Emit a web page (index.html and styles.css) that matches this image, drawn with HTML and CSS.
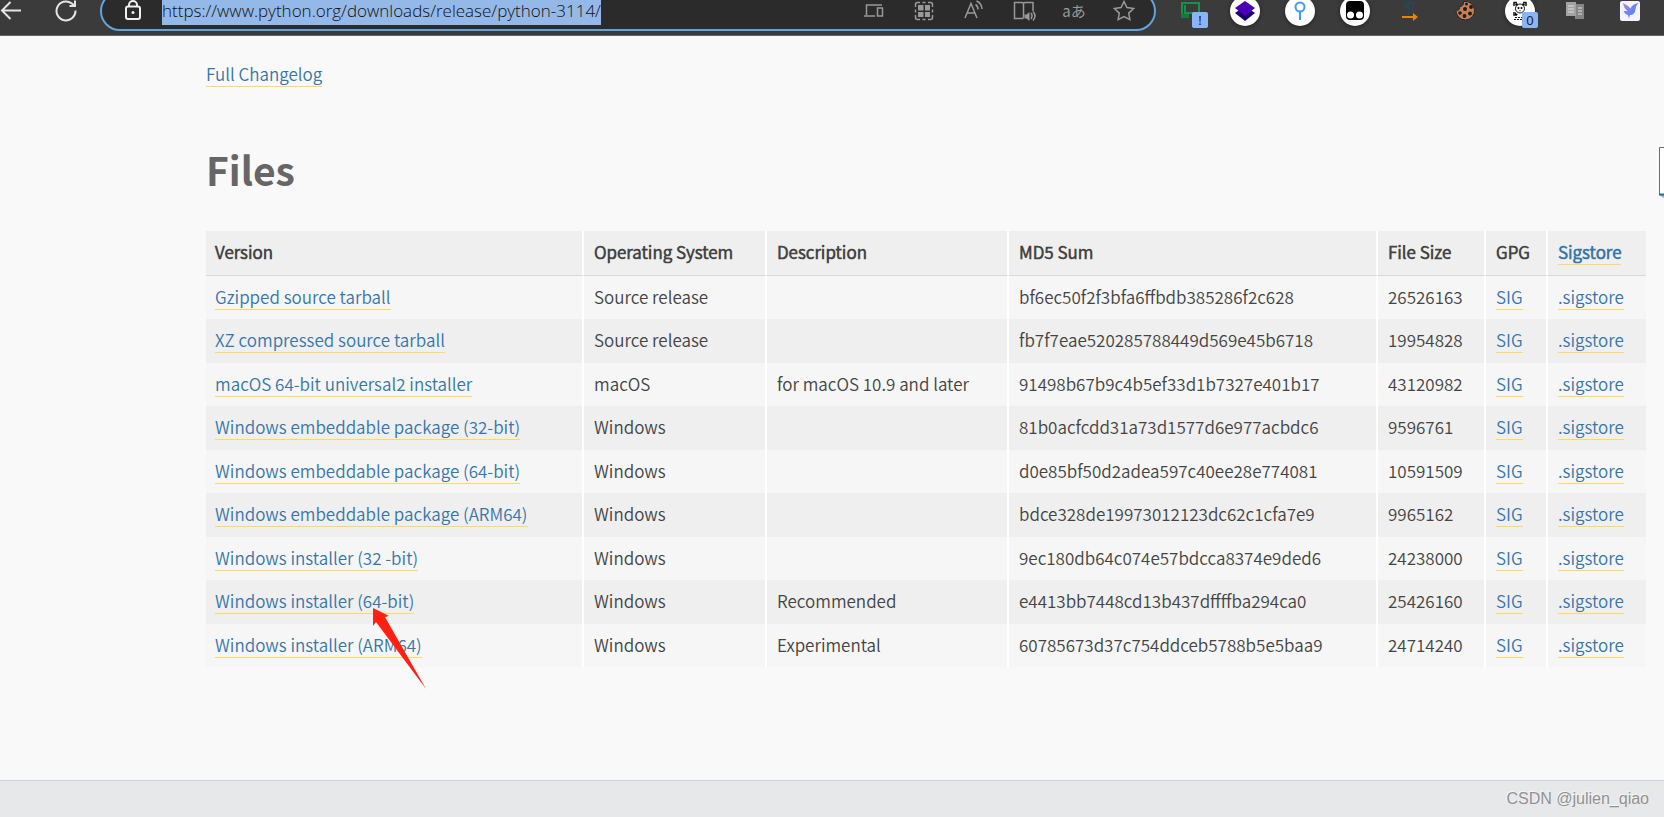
FILE: index.html
```html
<!DOCTYPE html>
<html lang="en">
<head>
<meta charset="utf-8">
<title>Python Release Python 3.11.4</title>
<link rel="stylesheet" href="styles.css">
</head>
<body>
<header class="toolbar">
  <button class="nav" aria-label="Back"><svg width="22" height="24" viewBox="0 0 22 24"><path d="M21 11.500H2M10.500 3L2 11.500L10.500 20"/></svg></button>
  <button class="nav" aria-label="Refresh"><svg width="22" height="24" viewBox="0 0 22 24"><path d="M20.500 11.500A9.500 9.500 0 1 1 16.500 4.200L20 7M20 1.500V7H14.500"/></svg></button>
  <div class="address">
    <svg class="lock" width="18" height="24" viewBox="0 0 18 24"><rect x="2" y="7.500" width="14" height="12.500" rx="2"/><path d="M5 7.500V6a4 4 0 0 1 8 0v1.500"/><circle class="dot" cx="9" cy="13.500" r="1.500"/></svg>
    <input class="url" type="text" aria-label="Address" value="https://www.python.org/downloads/release/python-3114/">
    <div class="tools">
      <button aria-label="Devices"><svg width="24" height="24" viewBox="0 0 24 24"><path d="M4.500 16V6H20M2 17h11M15.500 9h5v8h-5z"/></svg></button>
      <button aria-label="Apps"><svg width="24" height="24" viewBox="0 0 24 24"><path d="M3.500 8V5.500q0-2 2-2H8M10.500 3.500h3M16 3.500h2.500q2 0 2 2V8M3.500 10.500v3M20.500 10.500v3M3.500 16v2.500q0 2 2 2H8M10.500 20.500h3M16 20.500h2.500q2 0 2-2V16"/><path class="solid" d="M6 6h5.500v5.500h-5.500zM13 6h5v5.500h-5zM6 13h5.500v5h-5.500zM13 13h5v5h-5z"/></svg></button>
      <button aria-label="Read aloud"><svg width="24" height="24" viewBox="0 0 24 24"><path d="M3 19L9 4.500L15 19M5 14h8M13.500 5.500q2.500 1.500 2.500 5M14.500 2q5 2 5.500 8"/></svg></button>
      <button aria-label="Immersive reader"><svg width="24" height="24" viewBox="0 0 24 24"><path d="M11.500 4.500V19M11.500 19.500H2.500V3.500h7.500q1.500 0 1.500 1.500 0-1.500 1.500-1.500h8V12M19 14q2 2.500 0 6M21 12.500q4 4.500 0 9"/><path class="solid" d="M12.500 15.500h2l3-2.500v9l-3-2.500h-2z"/></svg></button>
      <button class="translate" aria-label="Translate">aあ</button>
      <button aria-label="Favorite"><svg width="24" height="24" viewBox="0 0 24 24"><path d="M12 2.500l2.900 6.100 6.700.9-4.900 4.600 1.200 6.600-5.900-3.200-5.900 3.200 1.200-6.600-4.900-4.600 6.700-.9z"/></svg></button>
    </div>
  </div>
  <div class="extensions">
    <button aria-label="Downloader"><svg width="34" height="32" viewBox="0 0 34 32"><g fill="none" stroke="#15914b" stroke-width="2"><path d="M10 8h16v12M9 7v14M12 10v8h14"/></g><path d="M8 19h8v4H8z" fill="#157a42"/></svg><span class="badge">!</span></button>
    <button aria-label="Layers"><svg class="disc" width="32" height="32" viewBox="0 0 32 32"><circle cx="16" cy="16" r="15" fill="#fff"/><path d="M6 18l10-7 10 7-10 8z" fill="#20006e"/><path d="M6 13l10-7 10 7-10 8z" fill="#4a00b4"/></svg></button>
    <button aria-label="Pin"><svg class="disc" width="32" height="32" viewBox="0 0 32 32"><circle cx="16" cy="16" r="15" fill="#fff"/><g fill="none" stroke="#3f9bfa" stroke-width="2"><circle cx="16" cy="12" r="4.500"/><path d="M16 17v8"/></g></svg></button>
    <button aria-label="Userscripts"><svg class="disc" width="32" height="32" viewBox="0 0 32 32"><circle cx="16" cy="16" r="15" fill="#fff"/><rect x="7" y="6" width="18" height="19" rx="4"/><circle cx="11.500" cy="20" r="3.500" fill="#fff"/><circle cx="20.500" cy="20" r="3.500" fill="#fff"/></svg></button>
    <button aria-label="Paragraph"><svg width="32" height="32" viewBox="0 0 32 32"><path d="M14 7h-1a3.500 3.500 0 0 0 0 7h1z" fill="#2c4452"/><path d="M15 18V7.500M19 18V7.500M13 7.500h9" fill="none" stroke="#2c4452" stroke-width="2"/><path d="M8 22h13" stroke="#ef8200" stroke-width="2"/><path d="M19 18l5 4-5 4z" fill="#ef8200"/></svg></button>
    <button aria-label="Cookies"><svg width="32" height="32" viewBox="0 0 32 32"><path d="M14.500 6.500A9.300 9.300 0 1 1 7 15q2.500 1 3.500-1 .5-1.500-.5-2.500 2 .5 3.500-1t1-4z" fill="#c37f56" stroke="#30241f"/><g fill="#241b18"><circle cx="17.500" cy="9" r="1.500"/><circle cx="22" cy="12" r="1.900"/><circle cx="16" cy="14" r="2"/><circle cx="11" cy="18" r="1.800"/><circle cx="21" cy="18.500" r="2"/><circle cx="15.500" cy="21" r="1.900"/></g></svg></button>
    <button aria-label="Panda"><svg class="disc" width="32" height="32" viewBox="0 0 32 32"><circle cx="16" cy="16" r="15" fill="#fff"/><g fill="none" stroke="#161616" stroke-width="1.500"><path d="M10 11V7.500h3M19 7.500h3V11M22 17v3h-3M13 20h-3v-3"/><circle cx="16" cy="13.500" r="4.500" stroke-width="1"/><path d="M11 22.500h9M10 24.500h8" stroke-width="1" stroke-dasharray="2 1"/></g><circle cx="12.500" cy="9.500" r="1.300"/><circle cx="19.500" cy="9.500" r="1.300"/><circle cx="14.500" cy="13" r="1"/><circle cx="17.500" cy="13" r="1"/><path d="M15 15.500h2l-1 1zM11 17l3 3h-3zM21 17l-3 3h3z"/></svg><span class="badge">0</span></button>
    <button aria-label="Documents"><svg width="32" height="32" viewBox="0 0 32 32"><path d="M16 9h9v15h-9z" fill="#858585"/><path d="M7 7h10v14H7z" fill="#a2a2a2"/><path d="M9 11h6M9 14h6M9 17h6M19 13h4M19 16h4M19 19h4" stroke="#ddd"/></svg></button>
    <button aria-label="Bird"><svg width="32" height="32" viewBox="0 0 32 32"><defs><linearGradient id="wing" x1="0" y1="0" x2="1" y2="1"><stop offset="0" stop-color="#b77cf5"/><stop offset="1" stop-color="#238df5"/></linearGradient></defs><rect x="6" y="6" width="20" height="20" rx="2" fill="#f3f3fd"/><path d="M9 8q5 2.500 7.500 5.500Q18 9 24.500 8 21.500 11 21.500 14q-.5 6-5.500 6l-1 3.500-1-3.500q-3.500-1-4.500-4h4q-4-3.500-4.500-8z" fill="url(#wing)"/></svg></button>
  </div>
</header>
<main class="page">
  <a class="link" href="#changelog">Full Changelog</a>
  <h1>Files</h1>
  <table class="files">
    <colgroup><col class="c-version"><col class="c-os"><col><col class="c-md5"><col class="c-size"><col class="c-gpg"><col class="c-sig"></colgroup>
    <thead><tr><th>Version</th><th>Operating System</th><th>Description</th><th>MD5 Sum</th><th>File Size</th><th>GPG</th><th><a class="link" href="#s">Sigstore</a></th></tr></thead>
    <tbody>
      <tr><td><a class="link" href="#f">Gzipped source tarball</a></td><td>Source release</td><td></td><td>bf6ec50f2f3bfa6ffbdb385286f2c628</td><td>26526163</td><td><a class="link" href="#g">SIG</a></td><td><a class="link" href="#s">.sigstore</a></td></tr>
      <tr><td><a class="link" href="#f">XZ compressed source tarball</a></td><td>Source release</td><td></td><td>fb7f7eae520285788449d569e45b6718</td><td>19954828</td><td><a class="link" href="#g">SIG</a></td><td><a class="link" href="#s">.sigstore</a></td></tr>
      <tr><td><a class="link" href="#f">macOS 64-bit universal2 installer</a></td><td>macOS</td><td>for macOS 10.9 and later</td><td>91498b67b9c4b5ef33d1b7327e401b17</td><td>43120982</td><td><a class="link" href="#g">SIG</a></td><td><a class="link" href="#s">.sigstore</a></td></tr>
      <tr><td><a class="link" href="#f">Windows embeddable package (32-bit)</a></td><td>Windows</td><td></td><td>81b0acfcdd31a73d1577d6e977acbdc6</td><td>9596761</td><td><a class="link" href="#g">SIG</a></td><td><a class="link" href="#s">.sigstore</a></td></tr>
      <tr><td><a class="link" href="#f">Windows embeddable package (64-bit)</a></td><td>Windows</td><td></td><td>d0e85bf50d2adea597c40ee28e774081</td><td>10591509</td><td><a class="link" href="#g">SIG</a></td><td><a class="link" href="#s">.sigstore</a></td></tr>
      <tr><td><a class="link" href="#f">Windows embeddable package (ARM64)</a></td><td>Windows</td><td></td><td>bdce328de19973012123dc62c1cfa7e9</td><td>9965162</td><td><a class="link" href="#g">SIG</a></td><td><a class="link" href="#s">.sigstore</a></td></tr>
      <tr><td><a class="link" href="#f">Windows installer (32 -bit)</a></td><td>Windows</td><td></td><td>9ec180db64c074e57bdcca8374e9ded6</td><td>24238000</td><td><a class="link" href="#g">SIG</a></td><td><a class="link" href="#s">.sigstore</a></td></tr>
      <tr><td class="marked"><a class="link" href="#f">Windows installer (64-bit)</a><svg class="arrow" width="56" height="84" viewBox="0 0 56 84"><path d="M1 0L17 8L13 9L54 81L4 14L1 18Z"/></svg></td><td>Windows</td><td>Recommended</td><td>e4413bb7448cd13b437dffffba294ca0</td><td>25426160</td><td><a class="link" href="#g">SIG</a></td><td><a class="link" href="#s">.sigstore</a></td></tr>
      <tr><td><a class="link" href="#f">Windows installer (ARM64)</a></td><td>Windows</td><td>Experimental</td><td>60785673d37c754ddceb5788b5e5baa9</td><td>24714240</td><td><a class="link" href="#g">SIG</a></td><td><a class="link" href="#s">.sigstore</a></td></tr>
    </tbody>
  </table>
  <svg class="side-tab" width="5" height="52" viewBox="0 0 5 52"><path d="M0 48l5 3v-3z" fill="#8db4d8"/><path d="M6 .5H.5v47H6" fill="#fff" stroke="#3d79ad"/><path d="M0 47.500h5" stroke="#2f6ca5" stroke-width="2"/></svg>
</main>
<footer class="footer">CSDN @julien_qiao</footer>
</body>
</html>
```
FILE: styles.css
```css
* { box-sizing: border-box; }
body {
  margin: 0;
  min-height: 100vh;
  display: flex;
  flex-direction: column;
  overflow-x: hidden;
  background: #f9f9f9;
  color: #444;
  font: 350 17px/20px "Noto Sans CJK SC DemiLight", "Noto Sans CJK SC", "Noto Sans", sans-serif;
}
button { border: 0; padding: 0; background: none; color: inherit; font: inherit; }
svg { display: block; }

/* The bar is scrolled partly past the top edge */
.toolbar {
  display: flex;
  align-items: center;
  margin-top: -9px;
  padding: 0 7px 4px 0;
  background: #3b3b3b;
  border-bottom: 1px solid #666;
}
.nav svg { fill: none; stroke: #e4e4e4; stroke-width: 2; }
.nav + .nav { margin-left: 33px; }
.address {
  flex: 1;
  display: flex;
  align-items: center;
  height: 40px;
  margin: 0 6px 0 23px;
  padding: 0 18px 0 22px;
  border: 2px solid #5da5e0;
  border-radius: 20px;
  background: #2b2b2b;
}
.lock { fill: none; stroke: #f0f0f0; stroke-width: 2; }
.lock .dot { fill: #f0f0f0; stroke: none; }
.url {
  field-sizing: content;
  height: 28px;
  margin-left: 20px;
  padding: 0;
  border: 0;
  background: #94b8e8;
  color: #111;
  font: 350 17px/28px "Open Sans", sans-serif;
}
.tools { display: flex; gap: 26px; margin-left: auto; color: #999; }
.tools button { width: 24px; height: 24px; }
.tools svg { fill: none; stroke: #999; stroke-width: 1.5; }
.tools .solid { fill: #999; stroke: none; }
.tools .translate { display: flex; align-items: center; justify-content: center; font: 15px/24px "Noto Sans CJK JP", sans-serif; white-space: nowrap; }
.extensions { display: flex; }
.extensions button { position: relative; display: flex; justify-content: center; width: 55px; }
.disc { filter: drop-shadow(0 1px 2px #222); }
.badge {
  position: absolute;
  left: 30px;
  top: 17px;
  width: 16px;
  height: 16px;
  border-radius: 2px;
  background: #8ab4f8;
  color: #222;
  font: 13px/16px "Noto Sans", sans-serif;
  text-align: center;
}

.page {
  position: relative;
  flex: 1;
  padding: 28px 18px 40px 206px;
}
.link { color: #3776ab; text-decoration: none; border-bottom: 1px solid #ffd95c; }
h1 { margin: 57px 0 34px; color: #666; font: 700 39px/56px "Noto Sans CJK SC", "Noto Sans", sans-serif; }
.files { width: 100%; table-layout: fixed; border-collapse: separate; border-spacing: 0; }
.c-version { width: 378px; }
.c-os { width: 183px; }
.c-md5 { width: 369px; }
.c-size { width: 108px; }
.c-gpg { width: 62px; }
.c-sig { width: 98px; }
th, td { padding: 0 8px 2px 10px; text-align: left; vertical-align: middle; white-space: nowrap; border-right: 2px solid #fff; }
th:first-child, td:first-child { padding-left: 9px; }
th:last-child, td:last-child { border-right: 0; }
th { height: 45px; background: #efefef; border-bottom: 1px solid #d9d9d9; font-weight: 700; }
td { height: 43px; background: #f6f6f6; }
tr:nth-child(even) td { height: 44px; background: #efefef; }
.marked { position: relative; }
.arrow { position: absolute; left: 166px; top: 28px; z-index: 1; fill: #ff2012; }
.side-tab { position: absolute; right: 0; top: 111px; }
.footer {
  padding: 8px 15px;
  border-top: 1px solid #cfd3d7;
  background: #e6e8ea;
  color: #929292;
  font: 16px/20px "Liberation Sans", sans-serif;
  text-align: right;
  text-shadow: -1px -1px 0 #f6f6f6;
}
```
